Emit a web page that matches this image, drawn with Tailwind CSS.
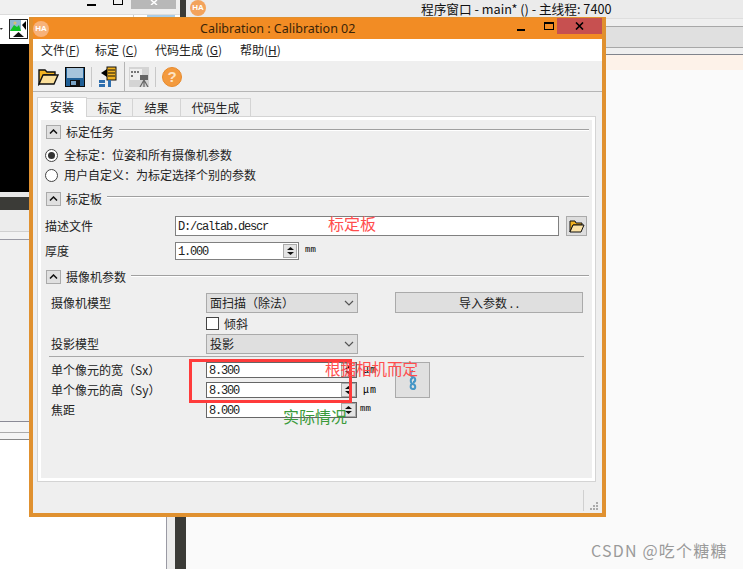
<!DOCTYPE html>
<html lang="zh">
<head>
<meta charset="utf-8">
<script src="https://cdn.jsdelivr.net/npm/@tailwindcss/browser@4"></script>
</head>
<body class="w-[743px] h-[569px] overflow-hidden bg-white text-black font-['Noto_Sans_CJK_SC','Noto_Sans',sans-serif] text-[12px]">
<div class="relative w-[743px] h-[569px] overflow-hidden">

  <!-- background: left pane of the host application -->
  <div class="absolute left-0 top-0 w-[180px] h-[569px] flex flex-col bg-white">
    <div class="h-[14px] bg-[#f0f0f0] relative shrink-0">
      <div class="absolute left-[87px] top-[4px] w-[9px] h-[2px] bg-black"></div>
      <div class="absolute left-[113px] top-0 w-[10px] h-[5px] border-[1px] border-t-0 border-black"></div>
      <div class="absolute left-[131px] top-0 w-[45px] h-[9px] bg-[#b8b8b8] flex justify-center"><svg width="8" height="5" viewBox="0 0 8 5"><path d="M1 0 4 2.500 7 0M1 5 4 2.500 7 5" stroke="#fff" stroke-width="1.500" fill="none"/></svg></div>
    </div>
    <div class="h-[30px] bg-white border-t border-[#dcdcdc] relative shrink-0">
      <svg class="absolute left-0 top-[12px]" width="3" height="4" viewBox="0 0 3 4"><path d="M0 1h3L1 3z" fill="#333"/></svg>
      <svg class="absolute left-[9px] top-[4px]" width="19" height="20" viewBox="0 0 19 20"><rect x="0.500" y="0.500" width="18" height="19" fill="#fff" stroke="#222"/><rect x="1" y="1" width="11" height="11" fill="#8fb6cf"/><path d="M1 12 5 6 8 8 10 6 12 12Z" fill="#12c224"/><circle cx="6" cy="4" r="1.500" fill="#d8c070"/><path d="M13 6 17 2V11z" fill="#000"/><path d="M4 18 9.500 13 15 18z" fill="#111"/></svg>
      <div class="absolute left-[133px] top-0 w-[47px] h-[3px] border-l border-[#ccc] flex"><div class="w-[13px]"></div><div class="w-[28px] h-full bg-[#a9cde8]"></div></div>
    </div>
    <div class="h-[148px] w-[30px] bg-black shrink-0"></div>
    <div class="h-[5px] w-[30px] bg-[#e8e8e8] shrink-0"></div>
    <div class="h-[13px] w-[30px] bg-[#3b3b37] shrink-0"></div>
    <div class="h-[22px] w-[30px] bg-[#ececec] border-b border-[#d0d0d0] shrink-0"></div>
    <div class="h-[8px] w-[30px] bg-[#f2f2f2] border-b border-[#9a9aa4] shrink-0"></div>
    <div class="h-[182px] w-[30px] bg-[#efefef] border-b border-[#8a8a96] shrink-0"></div>
    <div class="h-[11px] w-[30px] bg-[#f4f4f4] border-b border-[#aaa] shrink-0"></div>
    <div class="h-[7px] w-[30px] bg-[#f4f4f4] border-b border-[#888] shrink-0"></div>
  </div>

  <!-- background: splitter and bottom panes -->
  <div class="absolute left-[166px] top-[517px] w-[28px] h-[52px] flex border-x border-[#9a9aa4] bg-[#ececec] justify-center">
    <div class="w-[11px] h-full bg-[#3b3b37]"></div>
  </div>
  <div class="absolute left-[194px] top-[517px] w-[41px] h-[52px] bg-white border-r border-[#888]"></div>
  <div class="absolute left-[180px] top-0 w-[6px] h-[17px] bg-[#3b3b37]"></div>

  <!-- background: right host window -->
  <div class="absolute left-[186px] top-0 w-[557px] h-[569px] flex flex-col bg-[#fafafa]">
    <div class="h-[19px] bg-[#ebebeb] border-b border-[#dedede] relative shrink-0">
      <div class="absolute left-[4px] top-0 w-[16px] h-[16px] rounded-full bg-[#f3a35c] text-white font-bold text-[8px] leading-[16px] text-center font-['Liberation_Sans',sans-serif]">HA</div>
      <div class="absolute left-[235px] top-[-1px] text-[12.700px] leading-[20px] whitespace-nowrap text-[#111]">程序窗口 - main* () - 主线程: 7400</div>
    </div>
    <div class="h-[7px] bg-[#efefef] shrink-0"></div>
    <div class="h-[22px] bg-[#e0e0e0] border-y border-[#a8a8a8] shrink-0"></div>
    <div class="h-[7px] bg-[#efefef] border-b border-[#80848c] shrink-0"></div>
    <div class="h-[15px] bg-[#fdf2e9] shrink-0"></div>
  </div>

  <!-- Calibration dialog -->
  <div class="absolute left-[29px] top-[17px] w-[577px] h-[500px] flex flex-col bg-[#efefef] border-x-[4px] border-b-[4px] border-t border-[#e09130]">
    <!-- title bar -->
    <div class="h-[21px] bg-[#f28c24] flex items-center relative shrink-0">
      <div class="w-[16px] h-[16px] rounded-full bg-[#f7b27a] text-white font-bold text-[8px] leading-[16px] text-center font-['Liberation_Sans',sans-serif]">HA</div>
      <div class="absolute left-[167px] top-[1px] text-[12.500px] leading-[19px] text-[#3a2408] font-['Noto_Sans',sans-serif] whitespace-nowrap">Calibration : Calibration 02</div>
      <div class="absolute left-[484px] top-[11px] w-[8px] h-[2px] bg-black"></div>
      <div class="absolute left-[511px] top-[4px] w-[10px] h-[8px] border border-t-2 border-black"></div>
      <div class="absolute right-0 top-0 w-[45px] h-[16px] bg-[#c75050] flex items-center justify-center">
        <svg width="9" height="8" viewBox="0 0 9 8"><path d="M1 0.500 8 7.500M8 0.500 1 7.500" stroke="#000" stroke-width="1.600"/></svg>
      </div>
    </div>
    <!-- menu bar -->
    <div class="h-[22px] bg-white flex items-center gap-[17px] pl-[8px] text-[12px] text-[#222] shrink-0 whitespace-nowrap">
      <span class="w-[37px]">文件(<u>F</u>)</span>
      <span class="w-[43px]">标定 (<u>C</u>)</span>
      <span class="w-[68px]">代码生成 (<u>G</u>)</span>
      <span>帮助(<u>H</u>)</span>
    </div>
    <!-- toolbar -->
    <div class="h-[30px] mt-[1px] border-b border-[#b5b5b5] flex items-center shrink-0 pl-[5px]">
      <svg width="21" height="19" viewBox="0 0 21 19"><path d="M1 17V3h6l2 2h8v3H6L1 17z" fill="#f3b320" stroke="#111" stroke-width="1.400"/><path d="M1 17 5 8h15l-4 9z" fill="#fbdf9a" stroke="#111" stroke-width="1.400"/></svg>
      <svg class="ml-[6px]" width="20" height="20" viewBox="0 0 20 20"><rect x="0.500" y="0.500" width="19" height="19" fill="#1f5f96" stroke="#0a0a0a"/><rect x="2" y="1" width="16" height="10" fill="#a6c4dc"/><rect x="5" y="13" width="10" height="6" fill="#111"/><rect x="6" y="14" width="5" height="4" fill="#7aa3c4"/></svg>
      <div class="w-px h-[20px] bg-[#c8c8c8] ml-[6px]"></div>
      <svg class="ml-[6px]" width="19" height="22" viewBox="0 0 19 22"><rect x="9" y="1" width="9" height="13" fill="#f3b320" stroke="#111"/><path d="M10 4h7M10 7h7M10 10h7" stroke="#111"/><path d="M9 3v8L3 7z" fill="#000"/><path d="M1 14h6v3H1zM1 18h6v3H1zM10 14h3v7h-3z" fill="#2f6fae"/></svg>
      <div class="w-px h-[30px] bg-[#b5b5b5] ml-[7px]"></div>
      <svg class="ml-[4px]" width="20" height="20" viewBox="0 0 20 20"><rect width="20" height="20" fill="#d4d4d4"/><rect x="1" y="2" width="12" height="11" fill="#efefef"/><path d="M2 4h2v2H2zM5 4h2v2H5zM2 8h2v2H2zM8 4h2v2H8z" fill="#777"/><rect x="11" y="8" width="8" height="5" fill="#666"/><path d="M15 13 11 20M15 13l4 7M15 13v7" stroke="#666" stroke-width="1.200"/></svg>
      <div class="w-px h-[20px] bg-[#c8c8c8] ml-[6px]"></div>
      <div class="ml-[6px] w-[20px] h-[20px] rounded-full bg-[#f39a3e] text-[#fde3c4] font-bold text-[15px] leading-[18px] text-center font-['Liberation_Sans',sans-serif] border border-[#e88a2c]">?</div>
    </div>
    <!-- tabs -->
    <div class="h-[24px] pl-[4px] flex items-end text-[12px] text-[#222] shrink-0">
      <div class="w-[50px] h-[20px] pb-[2px] bg-white border border-b-0 border-[#d4d4d4] flex items-center justify-center z-10 mb-[-1px]">安装</div>
      <div class="w-[46px] h-[18px] bg-[#efefef] border border-l-0 border-b-0 border-[#d4d4d4] flex items-center justify-center">标定</div>
      <div class="w-[48px] h-[18px] bg-[#efefef] border border-l-0 border-b-0 border-[#d4d4d4] flex items-center justify-center">结果</div>
      <div class="w-[70px] h-[18px] bg-[#efefef] border border-l-0 border-b-0 border-[#d4d4d4] flex items-center justify-center">代码生成</div>
    </div>
    <!-- tab pane -->
    <div class="mx-[4px] w-[559px] h-[366px] bg-white border border-[#d4d4d4] p-[3px] shrink-0 text-[#222]">
      <div class="h-[358px] bg-[#efefef] flex flex-col relative pl-[5px]">

        <!-- 标定任务 -->
        <div class="flex items-center h-[13px] mt-[5px] shrink-0">
          <button class="w-[15px] h-[14px] bg-[#e0e0e0] border border-[#aaa] flex items-center justify-center"><svg width="9" height="5" viewBox="0 0 9 5"><path d="M1 4.500 4.500 1 8 4.500" fill="none" stroke="#111" stroke-width="1.500"/></svg></button>
          <span class="ml-[5px] whitespace-nowrap">标定任务</span>
          <div class="ml-[5px] w-[470px] h-[2px] bg-[#a0a0a0] border-b border-white mb-[3px]"></div>
        </div>
        <label class="flex items-center h-[20px] mt-[7px] ml-[-1px] shrink-0">
          <span class="w-[13px] h-[13px] rounded-full border border-[#444] bg-white flex items-center justify-center"><span class="w-[7px] h-[7px] rounded-full bg-[#333]"></span></span>
          <span class="ml-[6px] whitespace-nowrap">全标定：位姿和所有摄像机参数</span>
        </label>
        <label class="flex items-center h-[20px] ml-[-1px] shrink-0">
          <span class="w-[13px] h-[13px] rounded-full border border-[#444] bg-white"></span>
          <span class="ml-[6px] whitespace-nowrap">用户自定义：为标定选择个别的参数</span>
        </label>

        <!-- 标定板 -->
        <div class="flex items-center h-[13px] mt-[7px] shrink-0">
          <button class="w-[15px] h-[14px] bg-[#e0e0e0] border border-[#aaa] flex items-center justify-center"><svg width="9" height="5" viewBox="0 0 9 5"><path d="M1 4.500 4.500 1 8 4.500" fill="none" stroke="#111" stroke-width="1.500"/></svg></button>
          <span class="ml-[5px] whitespace-nowrap">标定板</span>
          <div class="ml-[5px] w-[482px] h-[2px] bg-[#a0a0a0] border-b border-white mb-[3px]"></div>
        </div>
        <div class="flex items-center h-[20px] mt-[11px] ml-[-1px] shrink-0">
          <span class="w-[130px] whitespace-nowrap">描述文件</span>
          <div class="w-[384px] h-[20px] bg-white border border-[#808080] flex items-center pl-[2px] pt-[1px] font-['Liberation_Mono',monospace] text-[12px] tracking-[-1.200px] leading-none">D:/caltab.descr</div>
          <button class="ml-[7px] w-[21px] h-[20px] bg-[#dedede] border border-[#aaa] flex items-center justify-center"><svg width="16" height="13" viewBox="0 0 16 13"><path d="M1 12V1h5l1 2h6v2H4L1 12z" fill="#f3b320" stroke="#111"/><path d="M1 12 4 5h11l-3 7z" fill="#fce3a6" stroke="#111"/></svg></button>
        </div>
        <div class="flex items-center h-[18px] mt-[6px] ml-[-1px] shrink-0">
          <span class="w-[130px] whitespace-nowrap">厚度</span>
          <div class="w-[124px] h-[18px] bg-white border border-[#808080] flex items-center justify-between pl-[2px] pr-[1px]">
            <span class="pt-[1px] font-['Liberation_Mono',monospace] text-[12px] tracking-[-1.200px] leading-none">1.000</span>
            <span class="w-[14px] h-[14px] bg-[#e4e4e4] border border-[#aaa] flex flex-col items-center justify-center gap-[2px]"><svg width="7" height="3" viewBox="0 0 7 3"><path d="M3.500 0 7 3H0z" fill="#111"/></svg><svg width="7" height="3" viewBox="0 0 7 3"><path d="M3.500 3 7 0H0z" fill="#111"/></svg></span>
          </div>
          <span class="ml-[6px] font-['Liberation_Mono',monospace] text-[9px] text-black">mm</span>
        </div>

        <!-- 摄像机参数 -->
        <div class="flex items-center h-[13px] mt-[10px] shrink-0">
          <button class="w-[15px] h-[14px] bg-[#e0e0e0] border border-[#aaa] flex items-center justify-center"><svg width="9" height="5" viewBox="0 0 9 5"><path d="M1 4.500 4.500 1 8 4.500" fill="none" stroke="#111" stroke-width="1.500"/></svg></button>
          <span class="ml-[5px] whitespace-nowrap">摄像机参数</span>
          <div class="ml-[5px] w-[458px] h-[2px] bg-[#a0a0a0] border-b border-white mb-[1px]"></div>
        </div>

        <div class="flex items-center h-[21px] mt-[9px] shrink-0 pl-[5px]">
          <span class="w-[155px] whitespace-nowrap">摄像机模型</span>
          <div class="w-[152px] h-[20px] bg-[#dfdfdf] border border-[#aaa] flex items-center justify-between pl-[3px] pr-[3px]">
            <span class="whitespace-nowrap">面扫描（除法）</span>
            <svg width="10" height="6" viewBox="0 0 10 6"><path d="M1 1 5 5 9 1" fill="none" stroke="#555" stroke-width="1.200"/></svg>
          </div>
          <button class="ml-[37px] w-[188px] h-[21px] bg-[#dfdfdf] border border-[#aaa] text-center whitespace-nowrap leading-[19px]">导入参数 . .</button>
        </div>
        <div class="flex items-center h-[13px] mt-[4px] shrink-0 pl-[160px]">
          <span class="w-[13px] h-[13px] bg-white border border-[#444]"></span>
          <span class="ml-[5px] whitespace-nowrap">倾斜</span>
        </div>
        <div class="flex items-center h-[20px] mt-[4px] shrink-0 pl-[5px]">
          <span class="w-[155px] whitespace-nowrap">投影模型</span>
          <div class="w-[152px] h-[20px] bg-[#dfdfdf] border border-[#aaa] flex items-center justify-between pl-[3px] pr-[3px]">
            <span>投影</span>
            <svg width="10" height="6" viewBox="0 0 10 6"><path d="M1 1 5 5 9 1" fill="none" stroke="#555" stroke-width="1.200"/></svg>
          </div>
        </div>
        <div class="ml-[3px] w-[535px] h-[1px] bg-[#a8a8a8] mt-[2px] shrink-0"></div>

        <!-- sensor rows -->
        <div class="mt-[5px] pl-[5px] flex shrink-0">
          <div class="flex flex-col gap-[4px]">
            <div class="flex items-center h-[16px]">
              <span class="w-[155px] whitespace-nowrap">单个像元的宽（Sx）</span>
              <div class="w-[151px] h-[16px] bg-white border border-[#666] flex items-center justify-between">
                <span class="pl-[2px] pt-[1px] font-['Liberation_Mono',monospace] text-[12px] tracking-[-1.200px] leading-none">8.300</span>
                <span class="w-[15px] h-[14px] bg-[#e4e4e4] border border-[#aaa] flex flex-col items-center justify-center gap-[2px]"><svg width="7" height="3" viewBox="0 0 7 3"><path d="M3.500 0 7 3H0z" fill="#111"/></svg><svg width="7" height="3" viewBox="0 0 7 3"><path d="M3.500 3 7 0H0z" fill="#111"/></svg></span>
              </div>
              <span class="w-[38px] pl-[6px] font-['Liberation_Mono',monospace] text-[10px] text-black tracking-[1px]">μm</span>
            </div>
            <div class="flex items-center h-[16px]">
              <span class="w-[155px] whitespace-nowrap">单个像元的高（Sy）</span>
              <div class="w-[151px] h-[16px] bg-white border border-[#666] flex items-center justify-between">
                <span class="pl-[2px] pt-[1px] font-['Liberation_Mono',monospace] text-[12px] tracking-[-1.200px] leading-none">8.300</span>
                <span class="w-[15px] h-[14px] bg-[#e4e4e4] border border-[#aaa] flex flex-col items-center justify-center gap-[2px]"><svg width="7" height="3" viewBox="0 0 7 3"><path d="M3.500 0 7 3H0z" fill="#111"/></svg><svg width="7" height="3" viewBox="0 0 7 3"><path d="M3.500 3 7 0H0z" fill="#111"/></svg></span>
              </div>
              <span class="w-[38px] pl-[6px] font-['Liberation_Mono',monospace] text-[10px] text-black tracking-[1px]">μm</span>
            </div>
            <div class="flex items-center h-[16px]">
              <span class="w-[155px] whitespace-nowrap">焦距</span>
              <div class="w-[151px] h-[16px] bg-white border border-[#666] flex items-center justify-between">
                <span class="pl-[2px] pt-[1px] font-['Liberation_Mono',monospace] text-[12px] tracking-[-1.200px] leading-none">8.000</span>
                <span class="w-[15px] h-[14px] bg-[#e4e4e4] border border-[#aaa] flex flex-col items-center justify-center gap-[2px]"><svg width="7" height="3" viewBox="0 0 7 3"><path d="M3.500 0 7 3H0z" fill="#111"/></svg><svg width="7" height="3" viewBox="0 0 7 3"><path d="M3.500 3 7 0H0z" fill="#111"/></svg></span>
              </div>
              <span class="w-[38px] pl-[3px] font-['Liberation_Mono',monospace] text-[9px] text-black">mm</span>
            </div>
          </div>
          <button class="w-[35px] h-[36px] bg-[#e0e0e0] border border-[#aaa] flex items-center justify-center">
            <svg width="8" height="20" viewBox="0 0 8 20"><path d="M4 1C1 1 1 6 4 7 7 8 7 12 4 12M4 8C1 8 1 13 4 14 7 15 7 19 4 19 1 19 1 15 3 14" fill="none" stroke="#4596c6" stroke-width="2"/></svg>
          </button>
        </div>
      </div>
    </div>
    <!-- status bar -->
    <div class="flex-1 relative">
      <div class="absolute left-[550px] top-[8px] w-px h-[21px] bg-[#d0d0d0]"></div>
      <svg class="absolute left-[557px] top-[20px]" width="9" height="9" viewBox="0 0 9 9"><path d="M6 0h2v2H6zM3 3h2v2H3zM6 3h2v2H6zM0 6h2v2H0zM3 6h2v2H3zM6 6h2v2H6z" fill="#aaa"/></svg>
    </div>
  </div>

  <!-- red and green annotations drawn over the screenshot -->
  <div class="absolute left-[189px] top-[359px] w-[163px] h-[44px] border-[3px] border-[#ff3b3b]"></div>
  <div class="absolute left-[328px] top-[212px] text-[16px] leading-[22px] text-[#ff4d4d] whitespace-nowrap">标定板</div>
  <div class="absolute left-[325px] top-[357px] text-[15.500px] leading-[22px] text-[#ff4d4d] whitespace-nowrap">根据相机而定</div>
  <div class="absolute left-[283px] top-[405px] text-[16px] leading-[22px] text-[#3a9a3a] whitespace-nowrap">实际情况</div>
  <div class="absolute left-[591px] top-[539px] text-[16px] leading-[22px] tracking-[1.200px] text-[#9a9a9a] whitespace-nowrap">CSDN @吃个糖糖</div>
</div>
</body>
</html>
